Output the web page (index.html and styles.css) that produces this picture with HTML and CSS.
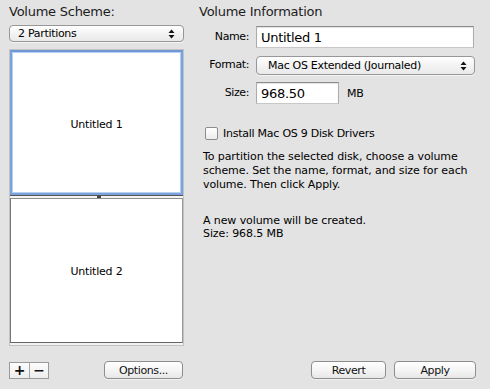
FILE: index.html
```html
<!DOCTYPE html>
<html>
<head>
<meta charset="utf-8">
<link rel="stylesheet" href="styles.css">
</head>
<body>
<div class="window">
  <div class="main">
    <div class="left">
      <h2 class="title">Volume Scheme:</h2>
      <div class="popup scheme-popup">
        <span class="popup-text">2 Partitions</span>
        <svg class="arrows" width="7" height="10" viewBox="0 0 7 10"><path d="M3.5 0.5 L6.5 4 L0.5 4 Z" fill="#111"/><path d="M0.5 6 L6.5 6 L3.5 9.5 Z" fill="#111"/></svg>
      </div>
      <div class="list">
        <div class="part part-selected">Untitled 1</div>
        <div class="divider"><span class="handle"></span></div>
        <div class="part part-plain">Untitled 2</div>
      </div>
    </div>
    <div class="right">
      <h2 class="title">Volume Information</h2>
      <div class="form">
        <label class="lbl">Name:</label>
        <div class="field name-field">Untitled 1</div>
        <label class="lbl">Format:</label>
        <div class="popup format-popup">
          <span class="popup-text">Mac OS Extended (Journaled)</span>
          <svg class="arrows" width="7" height="10" viewBox="0 0 7 10"><path d="M3.5 0.5 L6.5 4 L0.5 4 Z" fill="#111"/><path d="M0.5 6 L6.5 6 L3.5 9.5 Z" fill="#111"/></svg>
        </div>
        <label class="lbl">Size:</label>
        <div class="size-row">
          <div class="field size-field">968.50</div>
          <span class="unit">MB</span>
        </div>
      </div>
      <div class="check-row">
        <span class="checkbox"></span>
        <span class="check-label">Install Mac OS 9 Disk Drivers</span>
      </div>
      <p class="info">To partition the selected disk, choose a volume scheme. Set the name, format, and size for each volume. Then click Apply.</p>
      <p class="status">A new volume will be created.<br>Size: 968.5 MB</p>
    </div>
  </div>
  <div class="footer">
    <div class="footer-left">
      <div class="seg">
        <span class="seg-btn">+</span>
        <span class="seg-btn">&minus;</span>
      </div>
      <div class="btn options-btn">Options...</div>
    </div>
    <div class="footer-right">
      <div class="btn revert-btn">Revert</div>
      <div class="btn apply-btn">Apply</div>
    </div>
  </div>
</div>
</body>
</html>
```

FILE: styles.css
```css
* { box-sizing: border-box; }
html, body {
  margin: 0;
  padding: 0;
}
body {
  width: 490px;
  height: 389px;
  background: #e3e3e3;
  font-family: "DejaVu Sans", sans-serif;
  color: #000;
  overflow: hidden;
}
.window {
  display: flex;
  flex-direction: column;
  height: 389px;
}
.main {
  display: flex;
  padding-top: 4px;
}
.left {
  width: 175px;
  margin-left: 9px;
  display: flex;
  flex-direction: column;
}
.title {
  margin: 0;
  font-size: 13px;
  font-weight: normal;
  line-height: 16px;
  letter-spacing: -0.25px;
  color: #1c1c1c;
}
.popup {
  display: flex;
  align-items: center;
  justify-content: space-between;
  border: 1px solid #979797;
  border-radius: 4px;
  background: linear-gradient(#ffffff, #f3f3f3 50%, #e9e9e9);
  box-shadow: 0 1px 0 rgba(255,255,255,0.6);
  font-size: 11px;
  letter-spacing: -0.3px;
}
.scheme-popup {
  margin-top: 5px;
  height: 17px;
  padding: 0 8px 0 8px;
}
.arrows { display: block; flex: none; }
.list {
  margin-top: 7px;
  height: 297px;
  border: 1px solid #c2c2c2;
  background: #f2f2f2;
  display: flex;
  flex-direction: column;
}
.part {
  display: flex;
  align-items: center;
  justify-content: center;
  background: #fff;
  font-size: 11px;
  letter-spacing: -0.2px;
  height: 145px;
  padding-top: 3px;
}
.part-selected {
  border: 2px solid #7ba2dc;
  box-shadow: inset 0 0 0 1px #b6cff2;
  border-top-color: #6f97d4;
}
.divider {
  height: 3px;
  border-top: 1px solid #555;
  background: #f4f4f4;
  display: flex;
  justify-content: center;
}
.handle {
  width: 4px;
  height: 2px;
  background: #444;
  margin-left: 4px;
}
.part-plain {
  border-top: 1px solid #8e8e8e;
  border-left: 1px solid #777;
  border-right: 1px solid #9a9a9a;
  border-bottom: 1px solid #666;
  padding-top: 1px;
}
.right {
  margin-left: 15px;
  width: 277px;
}
.form {
  display: grid;
  grid-template-columns: 50px 1fr;
  grid-template-rows: 22px 18px 22px;
  column-gap: 7px;
  row-gap: 8px;
  align-items: center;
  margin-top: 6px;
}
.lbl {
  text-align: right;
  font-size: 11px;
  letter-spacing: -0.4px;
  line-height: 14px;
}
.field {
  height: 22px;
  background: #fff;
  border: 1px solid #acacac;
  border-top-color: #8a8a8a;
  border-bottom-color: #c8c8c8;
  box-shadow: inset 0 1px 1px rgba(0,0,0,0.12);
  font-size: 13px;
  letter-spacing: -0.3px;
  padding: 2px 4px 0 4px;
  line-height: 17px;
  color: #000;
}
.name-field { width: 218px; }
.format-popup {
  width: 219px;
  height: 19px;
  padding: 0 7px 0 11px;
  margin-top: 1px;
}
.size-row {
  display: flex;
  align-items: center;
}
.size-field { width: 83px; }
.unit {
  margin-left: 8px;
  font-size: 11px;
  letter-spacing: -0.3px;
}
.check-row {
  display: flex;
  align-items: center;
  margin-top: 23px;
  margin-left: 6px;
  height: 13px;
}
.checkbox {
  width: 13px;
  height: 13px;
  border: 1px solid #8c8c8c;
  border-radius: 2px;
  background: linear-gradient(#ffffff, #ececec);
  box-shadow: inset 0 1px 1px rgba(255,255,255,0.8);
}
.check-label {
  margin-left: 5px;
  font-size: 11px;
  letter-spacing: -0.25px;
}
.info {
  margin: 10px 0 0 4px;
  font-size: 11px;
  line-height: 14px;
  letter-spacing: -0.1px;
  width: 270px;
}
.status {
  margin: 22px 0 0 4px;
  font-size: 11px;
  line-height: 13px;
  letter-spacing: -0.1px;
}
.footer {
  margin-top: auto;
  display: flex;
  align-items: center;
  padding: 0 14px 10px 9px;
}
.footer-left {
  width: 175px;
  display: flex;
  align-items: center;
  justify-content: space-between;
}
.seg {
  display: flex;
  height: 17px;
  border: 1px solid #9a9a9a;
  background: linear-gradient(#fdfdfd, #ececec);
}
.seg-btn {
  width: 19px;
  display: flex;
  align-items: center;
  justify-content: center;
  font-size: 14px;
  font-weight: bold;
  line-height: 14px;
  color: #111;
}
.seg-btn + .seg-btn { border-left: 1px solid #a5a5a5; }
.btn {
  height: 18px;
  border: 1px solid #8e8e8e;
  border-radius: 4px;
  background: linear-gradient(#ffffff, #f5f5f5 50%, #e7e7e7);
  box-shadow: 0 1px 0 rgba(255,255,255,0.5);
  display: flex;
  align-items: center;
  justify-content: center;
  font-size: 11px;
  letter-spacing: -0.4px;
  color: #111;
}
.options-btn { width: 79px; margin-right: 1px; }
.footer-right {
  margin-left: auto;
  display: flex;
  gap: 8px;
}
.revert-btn { width: 75px; }
.apply-btn { width: 82px; }
```
